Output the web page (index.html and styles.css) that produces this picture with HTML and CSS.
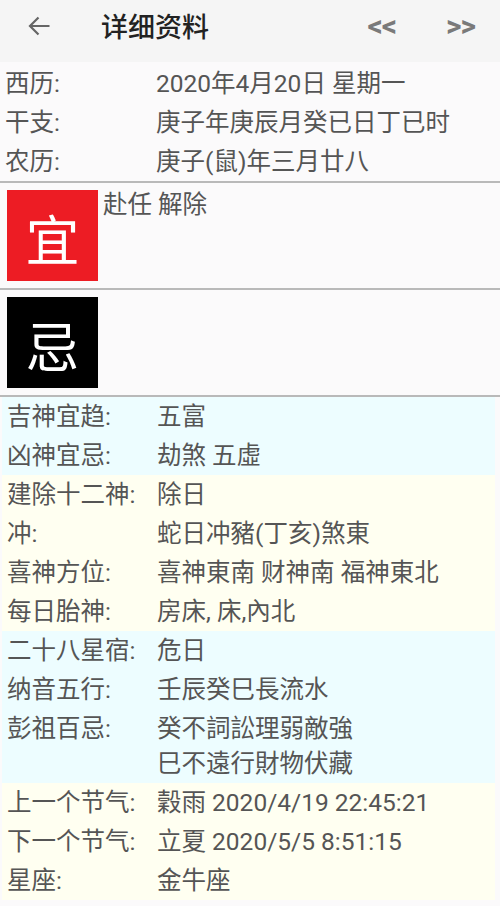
FILE: index.html
```html
<!DOCTYPE html>
<html lang="zh-CN">
<head>
<meta charset="UTF-8">
<title>详细资料</title>
<link rel="stylesheet" href="styles.css">
</head>
<body>

<div class="toolbar">
    <svg class="back" width="24" height="22" viewBox="0 0 24 22">
        <path d="M22.5 11H3 M11.5 2.5L3 11l8.5 8.5" fill="none" stroke="#666" stroke-width="2.2"/>
    </svg>
    <span class="title">详细资料</span>
    <span class="nav prev">&lt;&lt;</span>
    <span class="nav next">&gt;&gt;</span>
</div>

<div class="basic">
    <div class="row"><span class="label">西历:</span><span>2020年4月20日 星期一</span></div>
    <div class="row"><span class="label">干支:</span><span>庚子年庚辰月癸已日丁已时</span></div>
    <div class="row"><span class="label">农历:</span><span>庚子(鼠)年三月廿八</span></div>
</div>

<div class="divider"></div>
<div class="yiji">
    <div class="badge yi">宜</div>
    <div class="yiji-text">赴任 解除</div>
</div>
<div class="divider"></div>
<div class="yiji">
    <div class="badge ji">忌</div>
    <div class="yiji-text"></div>
</div>
<div class="divider"></div>

<div class="group blue">
    <div class="row"><span class="label">吉神宜趋:</span><span>五富</span></div>
    <div class="row"><span class="label">凶神宜忌:</span><span>劫煞 五虛</span></div>
</div>

<div class="group yellow">
    <div class="row"><span class="label">建除十二神:</span><span>除日</span></div>
    <div class="row"><span class="label">冲:</span><span>蛇日冲豬(丁亥)煞東</span></div>
    <div class="row"><span class="label">喜神方位:</span><span>喜神東南 财神南 福神東北</span></div>
    <div class="row"><span class="label">每日胎神:</span><span>房床, 床,內北</span></div>
</div>

<div class="group blue">
    <div class="row"><span class="label">二十八星宿:</span><span>危日</span></div>
    <div class="row"><span class="label">纳音五行:</span><span>壬辰癸巳長流水</span></div>
    <div class="row"><span class="label">彭祖百忌:</span><span>癸不詞訟理弱敵強<br>巳不遠行財物伏藏</span></div>
</div>

<div class="group yellow">
    <div class="row"><span class="label">上一个节气:</span><span>穀雨 2020/4/19 22:45:21</span></div>
    <div class="row"><span class="label">下一个节气:</span><span>立夏 2020/5/5 8:51:15</span></div>
    <div class="row"><span class="label">星座:</span><span>金牛座</span></div>
</div>

</body>
</html>
```

FILE: styles.css
```css
body {
    margin: 0;
    padding: 0;
    background-color: #fbfafb;
    font-family: Roboto, "Noto Sans CJK SC", sans-serif;
    color: #555;
    width: 500px;
    height: 906px;
    overflow: hidden;
}

.toolbar {
    display: flex;
    align-items: center;
    height: 50px;
    padding-bottom: 12px;
    background-color: #f5f5f5;
}

.back {
    margin-left: 27px;
    margin-top: 2px;
}

.title {
    margin-left: 50px;
    font-family: "Noto Sans CJK SC", sans-serif;
    font-size: 27px;
    font-weight: 500;
    color: #222;
}

.nav {
    font-family: Roboto, sans-serif;
    font-size: 30px;
    font-weight: bold;
    color: #7a7a7a;
    letter-spacing: -1px;
}

.prev {
    margin-left: auto;
}

.next {
    margin-left: 50px;
    margin-right: 25px;
}

.basic {
    padding-top: 2px;
}

.row {
    display: grid;
    grid-template-columns: 150px 1fr;
    font-size: 24.5px;
    line-height: 35px;
    padding: 2px 0;
    white-space: nowrap;
}

.basic .row {
    padding-left: 5px;
    grid-template-columns: 151px 1fr;
}

.divider {
    height: 2px;
    background-color: #b9b9b9;
}

.yiji {
    display: flex;
    padding: 7px 7px;
}

.badge {
    width: 91px;
    height: 91px;
    display: flex;
    align-items: center;
    justify-content: center;
    padding-top: 4px;
    box-sizing: border-box;
    font-family: "Noto Sans CJK SC", sans-serif;
    font-size: 54px;
    color: #fff;
}

.yi {
    background-color: #ed1c24;
}

.ji {
    background-color: #000;
}

.yiji-text {
    margin-left: 5px;
    font-size: 24.5px;
    line-height: 30px;
}

.group {
    margin: 0 5px 0 2px;
}

.group .row {
    padding-left: 5px;
}

.blue {
    background-color: #edfdff;
}

.yellow {
    background-color: #fffff1;
}
```
